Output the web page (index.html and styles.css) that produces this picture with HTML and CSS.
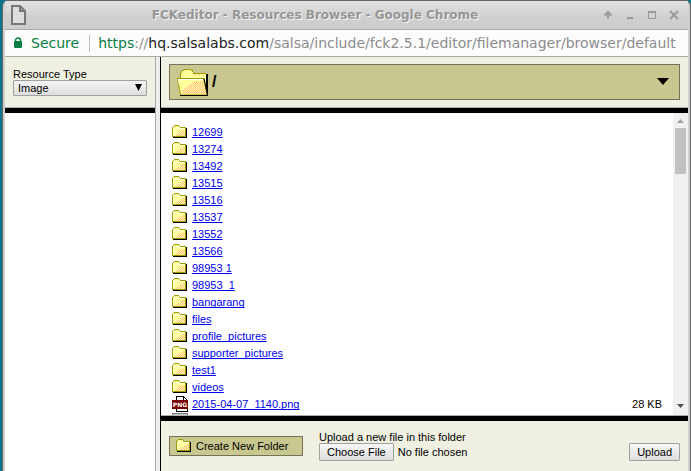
FILE: index.html
```html
<!DOCTYPE html>
<html lang="en">
<head>
<meta charset="utf-8">
<title>FCKeditor - Resources Browser</title>
<link rel="stylesheet" href="styles.css">
</head>
<body>
<svg class="defs" width="0" height="0" aria-hidden="true">
  <defs>
    <symbol id="folder" viewBox="0 0 16 16">
      <path d="M3 13h12V4h-1v9z" fill="#000"/>
      <path d="M1 13h14v1H1zM14 4h1v10h-1z" fill="#000"/>
      <path d="M0 4h14v9H0zM2 2h5v2H2z" fill="#ffff9c"/>
      <path d="M11 6.500h2M8 7.500h5M9 8.500h4M6 9.500h7M5 10.500h8M4 11.500h9" stroke="#ffbd8c" stroke-dasharray="1 1"/>
      <path d="M1 4h12v1H1zM1 4h1v8H1z" fill="#ffffce"/>
      <path d="M2 1h5v1H2zM1 2h1v1H1zM7 2h1v1H7zM0 3h14v1H8V3H1v10H0zM0 12h14v1H0zM13 3h1v10h-1z" fill="#9c9c00"/>
    </symbol>
  </defs>
</svg>
<div class="window">
  <header class="titlebar">
    <svg class="page-icon" width="16" height="20" viewBox="0 0 16 20"><path d="M1 1h8l5 5v13H1zM9 1v5h5" fill="#dedede" stroke="#777" stroke-width="2"/></svg>
    <h1>FCKeditor - Resources Browser - Google Chrome</h1>
    <div class="controls">
      <button aria-label="Shade"><svg width="10" height="10" viewBox="0 0 10 10"><path d="M5 9V2M1.500 5.500L5 2l3.500 3.500"/></svg></button>
      <button aria-label="Minimize"><svg width="10" height="10" viewBox="0 0 10 10"><path d="M2 8h6"/></svg></button>
      <button aria-label="Maximize"><svg width="10" height="10" viewBox="0 0 10 10"><path d="M1.500 1.500h7v7h-7z" class="thin"/><path d="M1 2h8" /></svg></button>
      <button aria-label="Close"><svg width="10" height="10" viewBox="0 0 10 10"><path d="M1 1l8 8M9 1L1 9"/></svg></button>
    </div>
  </header>
  <div class="address">
    <button class="secure"><svg width="10" height="12" viewBox="0 0 10 12"><path d="M2.500 5V3.500a2.500 2.500 0 0 1 5 0V5" fill="none" stroke="#0b8043" stroke-width="1.500"/><rect x="1" y="4" width="8" height="7" rx="1" fill="#0b8043"/></svg>Secure</button>
    <div class="url"><span class="scheme">https</span>://<span class="host">hq.salsalabs.com</span>/salsa/include/fck2.5.1/editor/filemanager/browser/default</div>
  </div>
  <div class="frames">
    <aside class="side">
      <form class="type-panel">
        <label for="type">Resource Type</label>
        <div class="select-box">
          <select id="type"><option>Image</option></select>
          <svg class="select-arrow" width="7" height="7" viewBox="0 0 7 7"><path d="M0 0h7L3.500 7z"/></svg>
        </div>
      </form>
      <div class="tree"></div>
    </aside>
    <main class="main">
      <div class="path-panel">
        <button class="path-bar" aria-label="Current folder /">
          <svg width="34" height="30" viewBox="0 0 34 30">
            <g shape-rendering="crispEdges">
              <path d="M30 7h2v20h-2zM5 28h27v1H5z" fill="#000"/>
              <path d="M4 11V6h1V4h1V3h2V2h7v1h2v2h1v1h12v22H6z" fill="#ffff9c"/>
              <path d="M19 8.500h10M18 7.500h11" stroke="#ffbd8c" stroke-dasharray="1 3"/>
              <path d="M4 11V6h1V4h1V3h2V2h7v1h2v2h1v1h12v1H17V5h-1V4h-1V3H8v1H6v2H5v5z" fill="#9c9c00"/>
            </g>
            <path d="M1.500 11.500h26l3.500 16.500H4.500z" fill="#ffff9c" stroke="#9c9c00"/>
            <path d="M2 12.500h25M3 13v4" stroke="#fff" fill="none"/>
            <path d="M20 14.500h7M16 15.500h12M19 16.500h9M14 17.500h14M13 18.500h15M10 19.500h19M11 20.500h18M8 21.500h21M9 22.500h20M6 23.500h24M7 24.500h23M6 25.500h24M7 26.500h23" stroke="#ffbd8c" stroke-dasharray="1 1" shape-rendering="crispEdges"/>
            <path d="M28 11.500L31.500 28M4 28.500h28" stroke="#000" fill="none"/>
          </svg>
          <span class="path">/</span>
          <svg class="drop" width="12" height="8" viewBox="0 0 12 8"><path d="M0 0h12L6 7z"/></svg>
        </button>
      </div>
      <div class="list-panel">
        <div class="list">
          <table>
            <tbody>
              <tr><td><svg class="ico"><use href="#folder"/></svg></td><td><a href="#">12699</a></td><td></td></tr>
              <tr><td><svg class="ico"><use href="#folder"/></svg></td><td><a href="#">13274</a></td><td></td></tr>
              <tr><td><svg class="ico"><use href="#folder"/></svg></td><td><a href="#">13492</a></td><td></td></tr>
              <tr><td><svg class="ico"><use href="#folder"/></svg></td><td><a href="#">13515</a></td><td></td></tr>
              <tr><td><svg class="ico"><use href="#folder"/></svg></td><td><a href="#">13516</a></td><td></td></tr>
              <tr><td><svg class="ico"><use href="#folder"/></svg></td><td><a href="#">13537</a></td><td></td></tr>
              <tr><td><svg class="ico"><use href="#folder"/></svg></td><td><a href="#">13552</a></td><td></td></tr>
              <tr><td><svg class="ico"><use href="#folder"/></svg></td><td><a href="#">13566</a></td><td></td></tr>
              <tr><td><svg class="ico"><use href="#folder"/></svg></td><td><a href="#">98953 1</a></td><td></td></tr>
              <tr><td><svg class="ico"><use href="#folder"/></svg></td><td><a href="#">98953_1</a></td><td></td></tr>
              <tr><td><svg class="ico"><use href="#folder"/></svg></td><td><a href="#">bangarang</a></td><td></td></tr>
              <tr><td><svg class="ico"><use href="#folder"/></svg></td><td><a href="#">files</a></td><td></td></tr>
              <tr><td><svg class="ico"><use href="#folder"/></svg></td><td><a href="#">profile_pictures</a></td><td></td></tr>
              <tr><td><svg class="ico"><use href="#folder"/></svg></td><td><a href="#">supporter_pictures</a></td><td></td></tr>
              <tr><td><svg class="ico"><use href="#folder"/></svg></td><td><a href="#">test1</a></td><td></td></tr>
              <tr><td><svg class="ico"><use href="#folder"/></svg></td><td><a href="#">videos</a></td><td></td></tr>
              <tr><td><svg class="ico" viewBox="0 0 16 16"><path d="M4.500 15.500V.5h7l4 4v11z" fill="#fff" stroke="#000"/><path d="M11.500 1v3.500H15" fill="none" stroke="#000"/><path d="M0 4h16v9H0z" fill="#7b0000"/><text x="8" y="11" class="png">PNG</text></svg></td><td><a href="#">2015-04-07_1140.png</a></td><td>28 KB</td></tr>
              <tr><td><svg class="ico" viewBox="0 0 16 16"><path d="M.5 .5h15v15H.5z" fill="#ccc" stroke="#777"/></svg></td><td></td><td></td></tr>
            </tbody>
          </table>
        </div>
        <div class="scrollbar" aria-hidden="true">
          <svg width="9" height="5" viewBox="0 0 9 5"><path d="M1 4L4.500 0 8 4z" fill="#a3a3a3"/></svg>
          <div class="thumb"></div>
          <svg width="9" height="5" viewBox="0 0 9 5"><path d="M1 0h7L4.500 4z" fill="#505050"/></svg>
        </div>
      </div>
      <form class="actions">
        <button type="button" class="create"><svg class="ico"><use href="#folder"/></svg>Create New Folder</button>
        <div class="upload">
          <label for="file">Upload a new file in this folder</label>
          <div class="upload-row">
            <input type="file" id="file">
            <button type="button" class="btn">Upload</button>
          </div>
        </div>
      </form>
    </main>
  </div>
</div>
</body>
</html>
```

FILE: styles.css
```css
* { box-sizing: border-box; }

body {
  margin: 0;
  height: 100vh;
  padding-left: 2px;
  overflow: hidden;
  background: #08758f;
  font: 11px/13px "Liberation Sans", Arial, sans-serif;
  color: #000;
}

button, input, select { font: inherit; color: inherit; margin: 0; }
svg { display: block; flex: none; }
.defs { position: absolute; }

.window {
  height: 100%;
  display: flex;
  flex-direction: column;
  background: #cfcfcf;
  border: solid #666;
  border-width: 1px 1px 0;
  border-radius: 6px 6px 0 0;
  padding: 0 2px;
}

.titlebar {
  flex: none;
  height: 29px;
  display: flex;
  align-items: center;
  padding: 0 9px 0 6px;
  border-bottom: 1px solid #aaa;
  background: linear-gradient(#e2e2e2, #cfcfcf 60%, #cdcdcd);
}

.titlebar h1 {
  flex: 1;
  margin: 0;
  text-align: center;
  font: bold 12px/16px "DejaVu Sans", sans-serif;
  color: #969696;
  text-shadow: 1px 1px 0 #f4f4f4;
}

.controls { display: flex; gap: 12px; }
.controls button { border: 0; padding: 0; background: none; }
.controls path { fill: none; stroke: #999; stroke-width: 2; }
.controls .thin { stroke-width: 1; }

.address {
  flex: none;
  height: 27px;
  display: flex;
  align-items: center;
  padding: 0 2px 0 8px;
  background: #fcfcfc;
  border-bottom: 1px solid #aaa;
  font: 14px/17px "DejaVu Sans", sans-serif;
}

.secure {
  display: flex;
  align-items: center;
  gap: 8px;
  border: 0;
  border-right: 1px solid #bbb;
  padding: 0 10px 0 0;
  margin-right: 8px;
  background: none;
  color: #0b8043;
}

.url { flex: 1; min-width: 0; overflow: hidden; white-space: nowrap; color: #8c8c8c; }
.scheme { color: #0b8043; }
.host { color: #222; }

.frames { flex: 1; min-height: 0; display: flex; background: #ededed; }
.side { flex: none; width: 151px; display: flex; flex-direction: column; border-right: 1px solid #aaa; }
.tree { flex: 1; border-top: 5px solid #000; background: #fff; }
.main { flex: 1; min-width: 0; display: flex; flex-direction: column; margin-left: 4px; border-left: 1px solid #000; }

.type-panel, .path-panel {
  flex: none;
  height: 51px;
  background: #f0f0e2;
  border-bottom: 1px solid #aaa;
}

.type-panel { padding: 11px 8px 0; }
.type-panel label { display: block; line-height: 12px; }
.select-box { position: relative; }

select {
  display: block;
  appearance: none;
  width: 100%;
  height: 16px;
  padding: 0 4px;
  border: 1px solid #a0a0a0;
  border-radius: 1px;
  background: linear-gradient(#f4f4f4, #dedede);
}

.select-arrow { position: absolute; right: 5px; top: 4px; }

.path-panel { padding: 7px 8px; }

.path-bar {
  width: 100%;
  height: 36px;
  display: flex;
  align-items: center;
  padding: 0 10px 0 6px;
  border: 1px solid #737357;
  background: #c8c78f;
}

.path { flex: 1; padding-left: 2px; text-align: left; font: bold 16px/18px "Liberation Sans", Arial, sans-serif; }

.list-panel {
  flex: 1;
  min-height: 0;
  display: flex;
  border-top: 5px solid #000;
  border-bottom: 1px solid #aaa;
  background: #fff;
}

.list { flex: 1; min-width: 0; overflow: hidden; padding: 11px 10px 0 11px; }
table { width: 100%; border-collapse: collapse; }
td { height: 17px; padding: 0; white-space: nowrap; }
td:first-child { width: 20px; vertical-align: top; }
td:last-child { text-align: right; padding-right: 1px; }
td a { color: #00e; text-decoration-skip-ink: none; }
.ico { width: 16px; height: 16px; shape-rendering: crispEdges; }
.png { font: bold 6px "DejaVu Sans", sans-serif; fill: #fff; text-anchor: middle; }

.scrollbar {
  flex: none;
  width: 15px;
  display: flex;
  flex-direction: column;
  align-items: center;
  padding: 6px 0;
  background: #f1f1f1;
}

.thumb { width: 11px; height: 46px; margin: 4px 0 auto; background: #c1c1c1; }

.actions {
  flex: none;
  height: 55px;
  display: flex;
  align-items: flex-start;
  gap: 16px;
  padding: 10px 8px 0;
  border-top: 5px solid #000;
  background: #f0f0e2;
}

.create {
  flex: none;
  width: 134px;
  height: 20px;
  display: flex;
  align-items: center;
  gap: 4px;
  margin-top: 5px;
  padding: 0 6px;
  border: 1px solid #737357;
  background: #c8c78f;
}

.upload { flex: 1; min-width: 0; }
.upload label { display: block; line-height: 12px; }
.upload-row { display: flex; justify-content: space-between; }

input[type="file"] { width: 240px; height: 18px; line-height: 18px; }

.btn, input::file-selector-button {
  height: 18px;
  padding: 0 7px;
  border: 1px solid #a0a0a0;
  border-radius: 1px;
  background: linear-gradient(#f6f6f6, #dedede);
  font: inherit;
  line-height: 16px;
}
```
